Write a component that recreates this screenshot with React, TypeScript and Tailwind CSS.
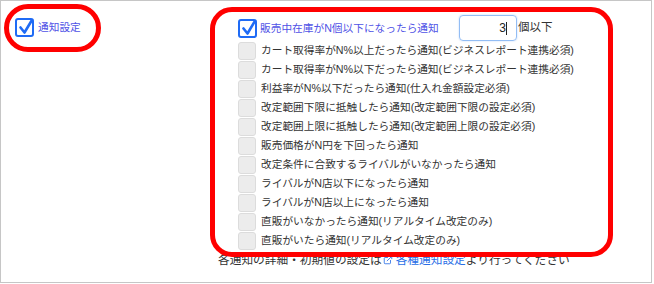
import React from "react";
import { ExternalLink } from "lucide-react";

const options: string[] = [
  "カート取得率がN%以上だったら通知(ビジネスレポート連携必須)",
  "カート取得率がN%以下だったら通知(ビジネスレポート連携必須)",
  "利益率がN%以下だったら通知(仕入れ金額設定必須)",
  "改定範囲下限に抵触したら通知(改定範囲下限の設定必須)",
  "改定範囲上限に抵触したら通知(改定範囲上限の設定必須)",
  "販売価格がN円を下回ったら通知",
  "改定条件に合致するライバルがいなかったら通知",
  "ライバルがN店以下になったら通知",
  "ライバルがN店以上になったら通知",
  "直販がいなかったら通知(リアルタイム改定のみ)",
  "直販がいたら通知(リアルタイム改定のみ)",
];

// Blue checked box
const CheckedBox: React.FC = () => (
  <span className="relative w-[19px] h-[19px] shrink-0 rounded-[3px] border-2 border-[#1f6bf5] bg-white">
    <svg
      className="absolute -left-[1px] -top-[3px]"
      width="20"
      height="20"
      viewBox="0 0 20 20"
    >
      <path
        d="M4.5 10.5 L8.5 15.5 L16 3"
        fill="none"
        stroke="#1f6bf5"
        strokeWidth="2.6"
        strokeLinecap="round"
        strokeLinejoin="round"
      />
    </svg>
  </span>
);

const App: React.FC = () => {
  return (
    <div
      className="relative w-[652px] h-[283px] border border-[#c6c6c6] bg-white text-[#333]"
      style={{ fontFamily: '"Liberation Sans", "Noto Sans CJK JP", sans-serif' }}
    >
      <div className="flex">
        {/* Left: master toggle */}
        <div className="w-[237px] pl-[14px] pt-[17px]">
          <div className="flex items-center h-[19px]">
            <CheckedBox />
            <span className="ml-[4px] text-[10.7px] text-[#4f52e6]">通知設定</span>
          </div>
        </div>

        {/* Right: notification options */}
        <div className="pt-[14px] flex flex-col">
          <div className="flex items-center h-[26px]">
            <CheckedBox />
            <span className="ml-[3px] w-[199px] text-[10.7px] text-[#4f52e6] whitespace-nowrap">
              販売中在庫がN個以下になったら通知
            </span>
            <div className="w-[58px] h-[26px] rounded-[4px] border border-[#93bdf4] shadow-[0_0_2px_#bcd6fa] flex items-center justify-end pr-[9px]">
              <span className="text-[12px] text-[#222] leading-none">3</span>
              <span className="w-px h-[13px] bg-[#222]" />
            </div>
            <span className="ml-[1px] text-[11.5px] text-[#333]">個以下</span>
          </div>
          {options.map((label) => (
            <div key={label} className="flex items-center h-[19px]">
              <span className="w-[18px] h-[18px] shrink-0 rounded-[3px] border border-[#dcdcdc] bg-[#ececec]" />
              <span className="ml-[5px] text-[10.7px] whitespace-nowrap">{label}</span>
            </div>
          ))}
        </div>
      </div>

      {/* Footer note */}
      <div className="pl-[217px] h-[19px] flex items-center text-[11.7px] whitespace-nowrap">
        <span>各通知の詳細・初期値の設定は</span>
        <ExternalLink className="w-[10px] h-[10px] text-[#2a6fe6] ml-[1px]" strokeWidth={2} />
        <span className="ml-[3px] text-[#2a6fe6]">各種通知設定</span>
        <span>より行ってください</span>
      </div>

      {/* Red annotation rings */}
      <div className="absolute left-[3px] top-[3px] w-[97px] h-[48px] rounded-full border-[5px] border-[#ff0000] pointer-events-none" />
      <div className="absolute left-[209px] top-[6px] w-[403px] h-[250px] rounded-[22px] border-[5px] border-[#ff0000] pointer-events-none" />
    </div>
  );
};

export default App;
